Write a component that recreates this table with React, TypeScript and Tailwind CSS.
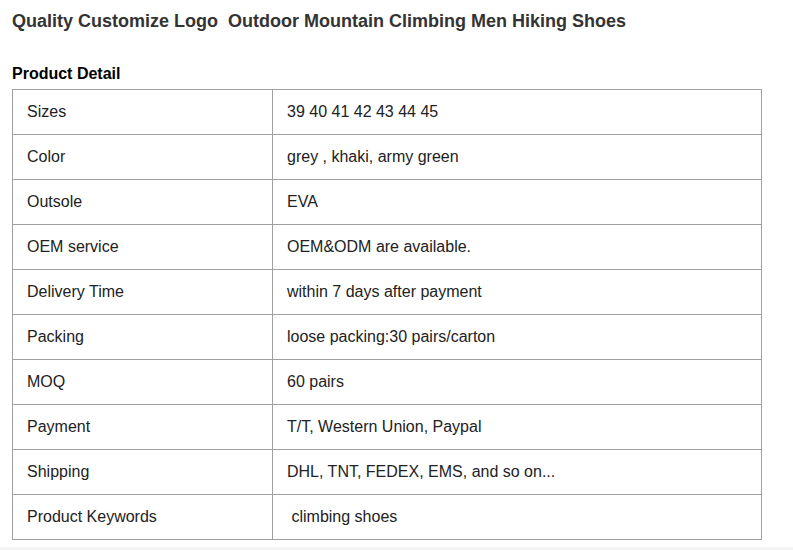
const rows: [string, string][] = [
  ['Sizes', '39 40 41 42 43 44 45'],
  ['Color', 'grey , khaki, army green'],
  ['Outsole', 'EVA'],
  ['OEM service', 'OEM&ODM are available.'],
  ['Delivery Time', 'within 7 days after payment'],
  ['Packing', 'loose packing:30 pairs/carton'],
  ['MOQ', '60 pairs'],
  ['Payment', 'T/T, Western Union, Paypal'],
  ['Shipping', 'DHL, TNT, FEDEX, EMS, and so on...'],
  ['Product Keywords', ' climbing shoes'],
];

export default function App() {
  return (
    <div className="w-[793px] h-[550px] bg-white overflow-hidden font-['Liberation_Sans',Arial,sans-serif]">
      <div className="px-3">
        <h1 className="pt-[10px] h-[60px] text-[18px] leading-[22px] font-bold text-[#333] whitespace-pre">
          Quality Customize Logo  Outdoor Mountain Climbing Men Hiking Shoes
        </h1>
        <h2 className="text-[16px] leading-[20px] font-bold text-black h-[29px] pt-[4px]">Product Detail</h2>
        <table className="w-[750px] border-collapse text-[16px] text-[#222]">
          <tbody>
            {rows.map(([k, v]) => (
              <tr key={k} className="h-[45px]">
                <td className="w-[260px] border border-[#a0a0a0] px-[14px] align-middle">{k}</td>
                <td className="border border-[#a0a0a0] px-[14px] align-middle whitespace-pre">{v}</td>
              </tr>
            ))}
          </tbody>
        </table>
      </div>
      <div className="mt-[7px] h-[4px] bg-[#f4f4f4]" />
    </div>
  );
}
